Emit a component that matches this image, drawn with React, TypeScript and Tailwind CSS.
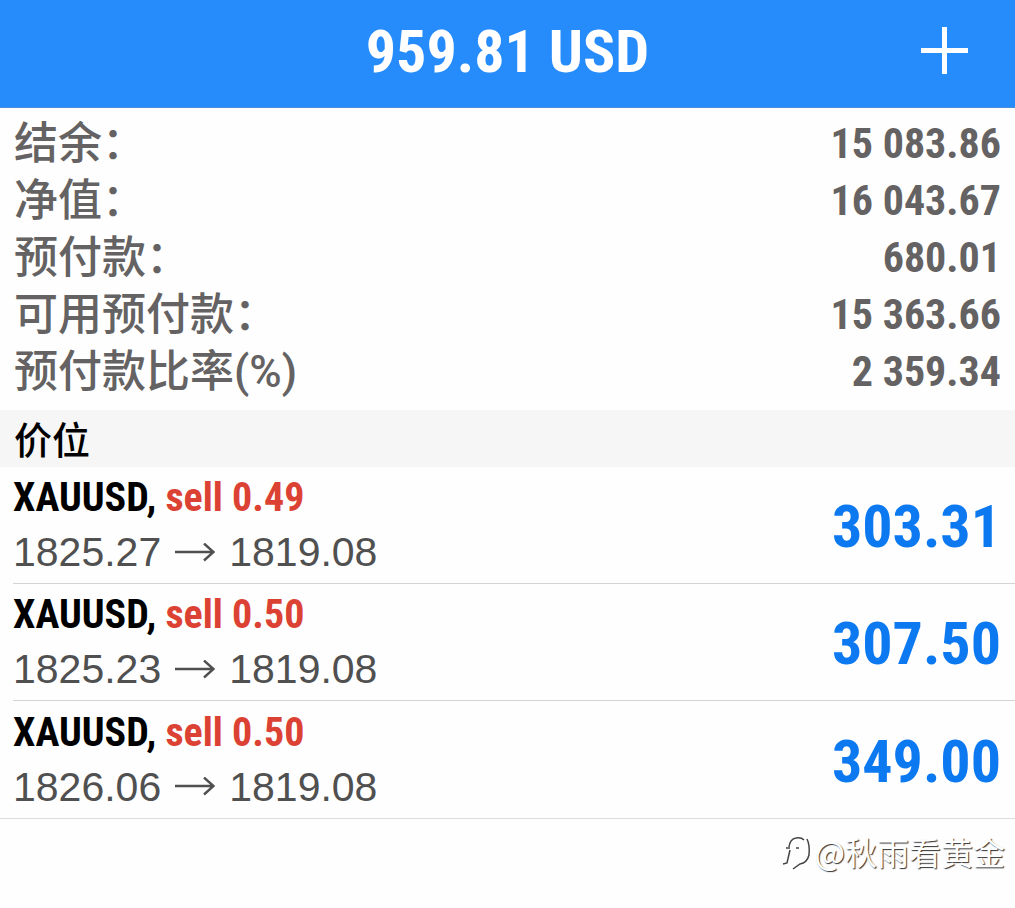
const balances = [
  { label: '结余：', value: '15 083.86' },
  { label: '净值：', value: '16 043.67' },
  { label: '预付款：', value: '680.01' },
  { label: '可用预付款：', value: '15 363.66' },
  { label: '预付款比率(%)', value: '2 359.34' },
];

const positions = [
  { symbol: 'XAUUSD', side: 'sell 0.49', open: '1825.27', current: '1819.08', profit: '303.31' },
  { symbol: 'XAUUSD', side: 'sell 0.50', open: '1825.23', current: '1819.08', profit: '307.50' },
  { symbol: 'XAUUSD', side: 'sell 0.50', open: '1826.06', current: '1819.08', profit: '349.00' },
];

function Header() {
  return (
    <header className="grid h-[108px] grid-cols-[1fr_auto_1fr] items-center border-b border-[#4a8edb] bg-[#268bfb] px-[44px] text-white">
      <h1 className="col-start-2 pb-1 text-[60px] leading-[80px] font-bold">959.81 USD</h1>
      <button type="button" aria-label="添加" className="justify-self-end">
        <svg width="53" height="60" viewBox="0 0 53 60" fill="none" stroke="currentColor" strokeWidth="5">
          <path d="M3 26.5H50M26.5 3V50" />
        </svg>
      </button>
    </header>
  );
}

function Arrow() {
  return (
    <svg width="40" height="20" viewBox="0 0 40 20" fill="none" stroke="currentColor" strokeWidth="2.4" aria-hidden="true">
      <path d="M0 9H38M29 0.5L38.5 9L29 17.5" />
    </svg>
  );
}

export default function App() {
  return (
    <div className="min-h-screen bg-[#fefefe] font-['Roboto_Condensed','Liberation_Sans',sans-serif] text-black">
      <Header />
      <main>
        <dl className="px-[14px] pt-[7px] pb-[10px] text-[#646262]">
          {balances.map((b) => (
            <div key={b.label} className="flex h-[57px] items-center justify-between">
              <dt className="font-['Roboto','Noto_Sans_CJK_SC',sans-serif] text-[44px] leading-[48px] font-medium">{b.label}</dt>
              <dd className="text-[42px] leading-[48px] font-bold">{b.value}</dd>
            </div>
          ))}
        </dl>
        <h2 className="h-[57px] bg-[#f7f6f7] px-[14px] font-['Noto_Sans_CJK_SC',sans-serif] text-[38px] leading-[55px] font-medium">
          价位
        </h2>
        <ul className="border-b border-[#dcdcdc]">
          {positions.map((p, i) => (
            <li key={i} className="ml-[13px] flex h-[117px] items-center justify-between border-b border-[#d4d4d4] pr-[14px] last:border-b-0">
              <div>
                <p className="text-[40px] leading-[55px] font-bold">
                  {p.symbol}, <span className="text-[#dc4234]">{p.side}</span>
                </p>
                <p className="flex items-center gap-[14px] font-['Liberation_Sans',sans-serif] text-[41px] leading-[55px] text-[#505050]">
                  <span>{p.open}</span>
                  <Arrow />
                  <span>{p.current}</span>
                </p>
              </div>
              <p className="pt-1 text-[60px] leading-[80px] font-bold text-[#0d79f0]">{p.profit}</p>
            </li>
          ))}
        </ul>
      </main>
      <footer className="flex items-center justify-end gap-1 px-[10px] pt-2 font-['Noto_Sans_CJK_SC',sans-serif] text-[32px] leading-[48px] text-white [text-shadow:1px_1px_1px_#333]">
        <svg width="30" height="40" viewBox="0 0 30 40" fill="none" stroke="#444" strokeWidth="1.5" aria-hidden="true">
          <path d="M2 33L6 32L9 19M5 17H9M8 16Q9 8 15 7Q20 6 23 9M26 8Q29 14 28 24Q26 32 19 33L12 38M15 17H18" />
        </svg>
        <span>@秋雨看黄金</span>
      </footer>
    </div>
  );
}
